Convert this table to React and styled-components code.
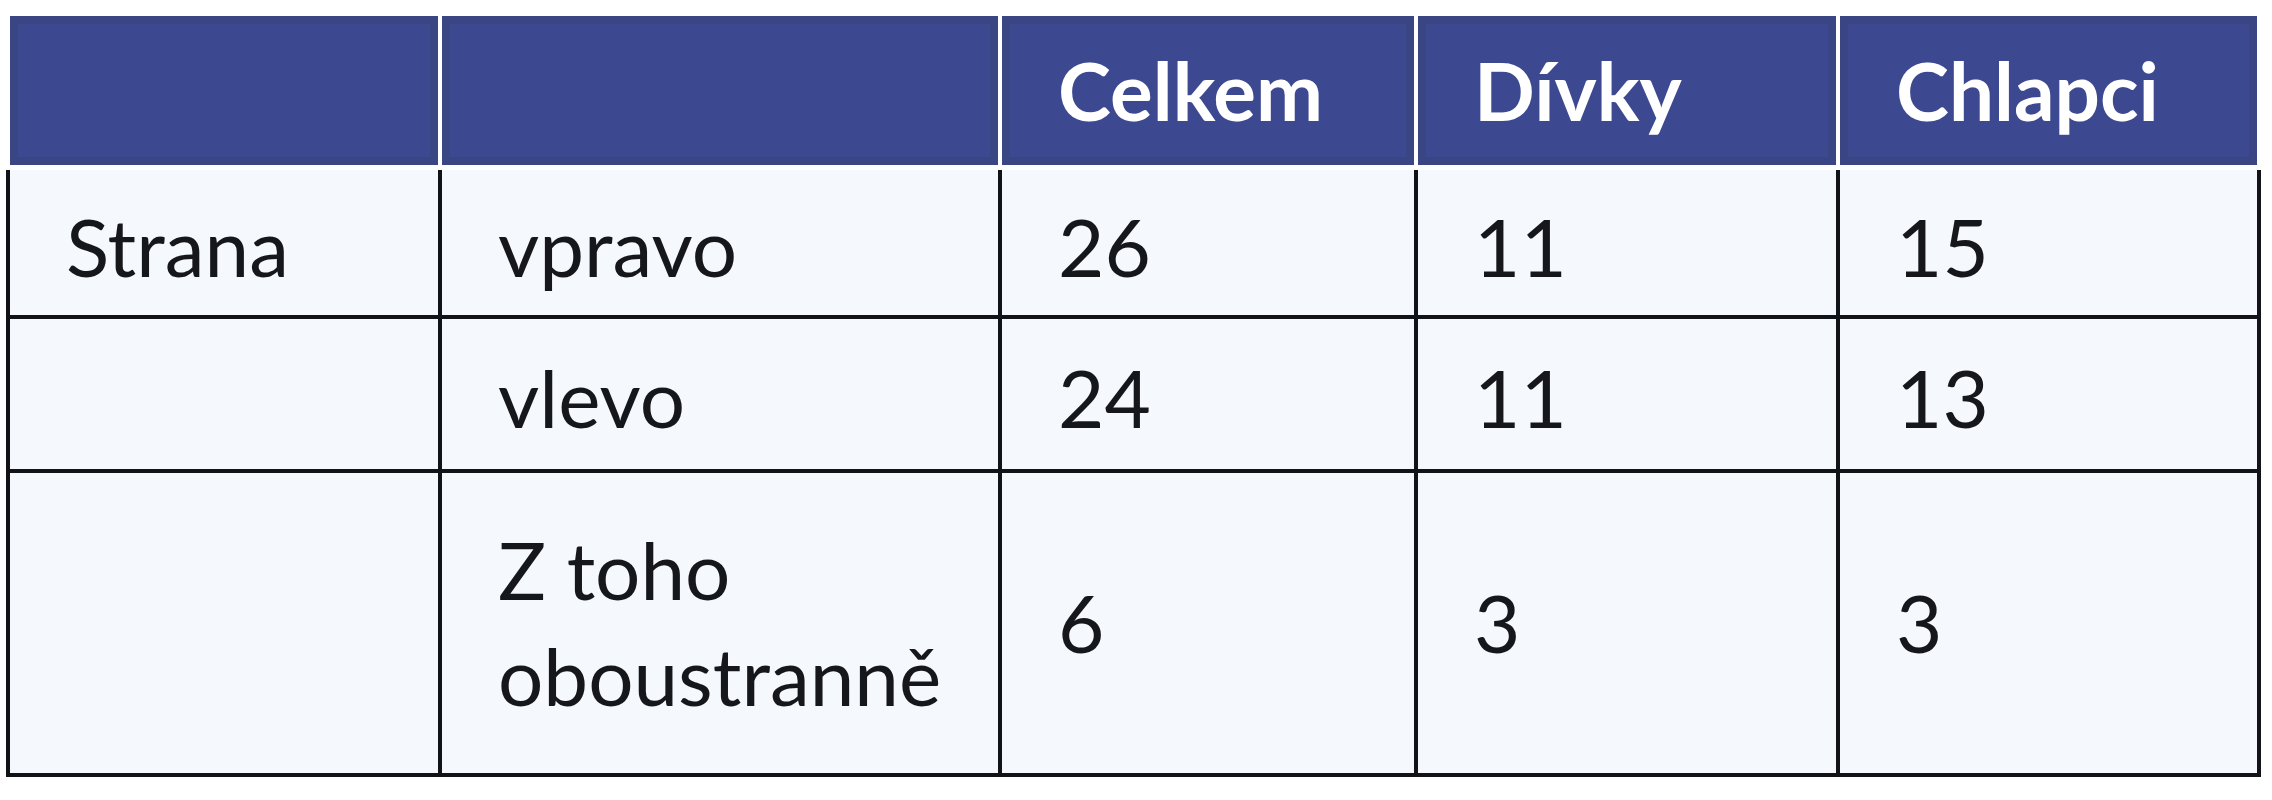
import React from 'react';
import styled, { createGlobalStyle } from 'styled-components';

const GlobalStyle = createGlobalStyle`
    html, body {
        margin: 0;
        padding: 0;
        background: #ffffff;
    }
    body {
        font-family: Lato, "Liberation Sans", Arial, sans-serif;
    }
`;

const COLUMNS = '428px 556px 412px 418px 417px';

const Page = styled.div`
    padding: 16px 0 0 6px;
`;

const Table = styled.div`
    width: 2255px;
    display: flex;
    flex-direction: column;
    gap: 5px;
`;

const HeaderRow = styled.div`
    display: grid;
    grid-template-columns: ${COLUMNS};
    column-gap: 4px;
    padding: 0 4px;
    height: 149px;
    background: #ffffff;
`;

const HeaderCell = styled.div`
    display: flex;
    align-items: center;
    padding-left: 56px;
    background: #3c4990;
    box-shadow: inset 0 0 0 8px #3a4684;
    color: #ffffff;
    font-size: 80px;
    font-weight: 700;
    line-height: 1.32;
`;

const Body = styled.div`
    display: flex;
    flex-direction: column;
    gap: 4px;
    background: #121317;
    border: 4px solid #121317;
    border-top: none;
`;

const Row = styled.div`
    display: grid;
    grid-template-columns: ${COLUMNS};
    column-gap: 4px;
    height: ${p => p.$height}px;
`;

const Cell = styled.div`
    display: flex;
    align-items: center;
    padding: ${p => p.$nudge || 0}px 0 0 56px;
    background: #f5f8fd;
    color: #16171b;
    font-size: 80px;
    font-weight: 400;
    line-height: 1.32;
`;

const HEADERS = ['', '', 'Celkem', 'Dívky', 'Chlapci'];

const ROWS = [
    { height: 145, nudge: 9, cells: ['Strana', 'vpravo', '26', '11', '15'] },
    { height: 150, nudge: 7, cells: ['', 'vlevo', '24', '11', '13'] },
    { height: 300, nudge: 0, cells: ['', ['Z toho', 'oboustranně'], '6', '3', '3'] },
];

const App = () => (
    <>
        <GlobalStyle />
        <Page>
            <Table>
                <HeaderRow>
                    {HEADERS.map((label, i) => (
                        <HeaderCell key={i}>{label}</HeaderCell>
                    ))}
                </HeaderRow>
                <Body>
                    {ROWS.map((row, r) => (
                        <Row key={r} $height={row.height}>
                            {row.cells.map((value, c) => (
                                <Cell key={c} $nudge={row.nudge}>
                                    {Array.isArray(value)
                                        ? <span>{value[0]}<br />{value[1]}</span>
                                        : value}
                                </Cell>
                            ))}
                        </Row>
                    ))}
                </Body>
            </Table>
        </Page>
    </>
);

export default App;
